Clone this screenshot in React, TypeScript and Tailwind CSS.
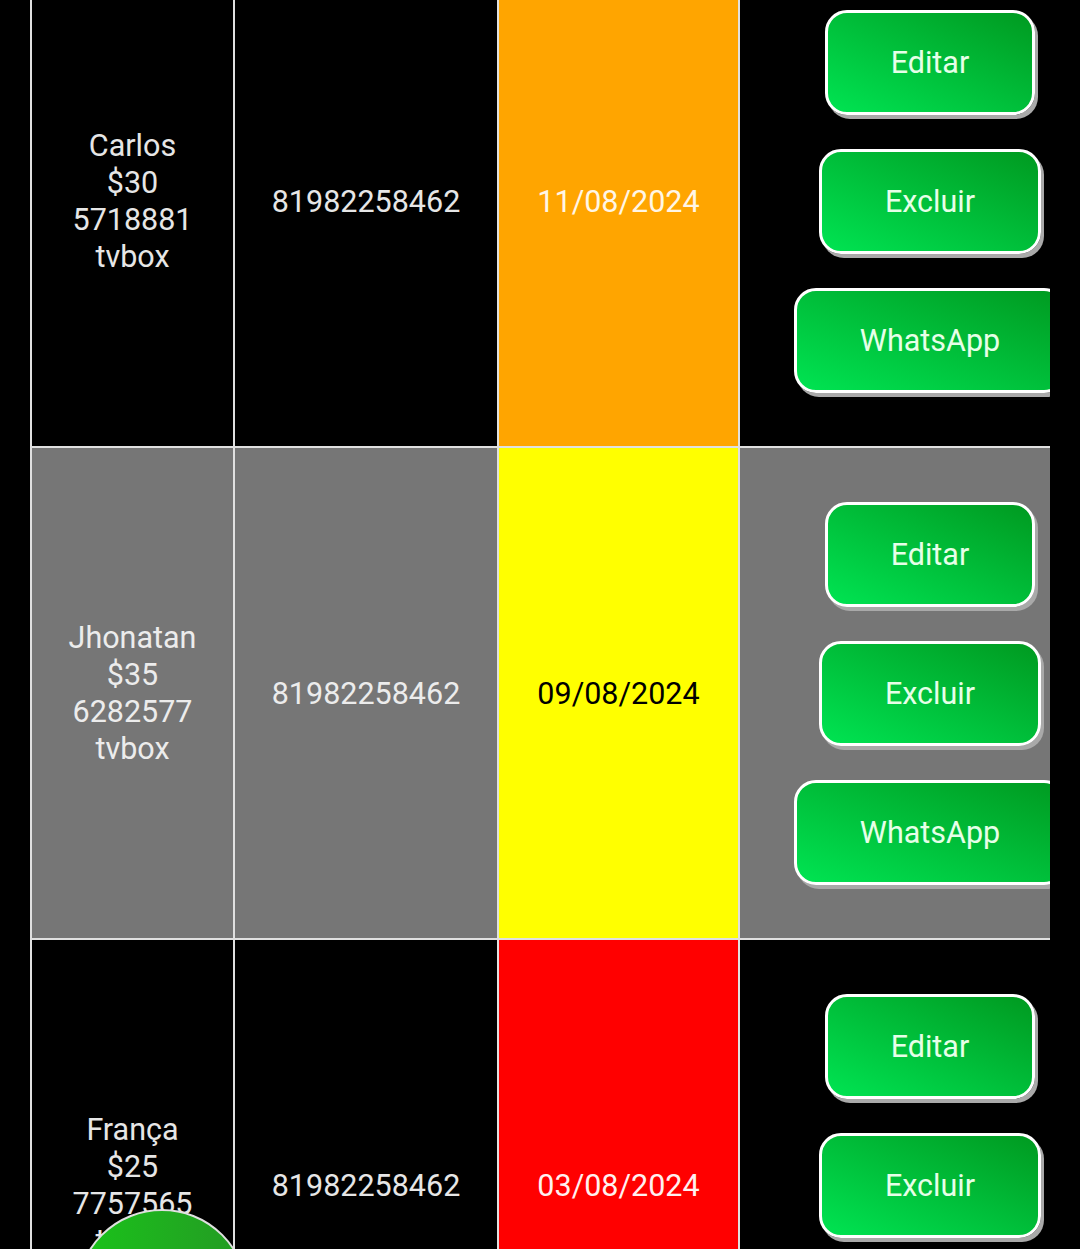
import React from 'react';

type Cliente = {
  nome: string;
  valor: string;
  codigo: string;
  tipo: string;
  telefone: string;
  vencimento: string;
  statusClass: string;
  rowClass: string;
};

const clientes: Cliente[] = [
  {
    nome: 'Carlos',
    valor: '$30',
    codigo: '5718881',
    tipo: 'tvbox',
    telefone: '81982258462',
    vencimento: '11/08/2024',
    statusClass: 'bg-[#ffa500] text-[#fff6e6]',
    rowClass: 'bg-black text-[#e6e6e6]',
  },
  {
    nome: 'Jhonatan',
    valor: '$35',
    codigo: '6282577',
    tipo: 'tvbox',
    telefone: '81982258462',
    vencimento: '09/08/2024',
    statusClass: 'bg-[#ffff00] text-black',
    rowClass: 'bg-[#767676] text-[#ececec]',
  },
  {
    nome: 'França',
    valor: '$25',
    codigo: '7757565',
    tipo: 'tvbox',
    telefone: '81982258462',
    vencimento: '03/08/2024',
    statusClass: 'bg-[#ff0000] text-[#fff0f0]',
    rowClass: 'bg-black text-[#e6e6e6]',
  },
];

const ActionButton = ({ label }: { label: string }) => (
  <button className="rounded-[22px] border-[3px] border-white bg-linear-to-tr from-[#00e452] to-[#009a20] px-[63px] py-[31px] text-[30.5px] leading-[37px] text-[#e6ffe8] shadow-[3px_4px_0_#a9a9a9] whitespace-nowrap">
    {label}
  </button>
);

export default function App() {
  return (
    <div className="min-h-[1249px] bg-black font-['Roboto',sans-serif]">
      <div className="ml-[30px] w-[1020px] h-[1249px] overflow-hidden">
        <table className="-mt-[46px] table-fixed border-collapse w-[1090px]">
          <colgroup>
            <col className="w-[203px]" />
            <col className="w-[264px]" />
            <col className="w-[241px]" />
            <col className="w-[382px]" />
          </colgroup>
          <tbody>
            {clientes.map((c, i) => (
              <tr key={i} className={c.rowClass}>
                <td className="h-[492px] border-[2px] border-[#e0e0e0] text-center align-middle text-[30.5px] leading-[37px]">
                  {c.nome}
                  <br />
                  {c.valor}
                  <br />
                  {c.codigo}
                  <br />
                  {c.tipo}
                </td>
                <td className="border-[2px] border-[#e0e0e0] text-center align-middle text-[30.5px] leading-[37px]">
                  {c.telefone}
                </td>
                <td className={`border-[2px] border-[#e0e0e0] text-center align-middle text-[30.5px] leading-[37px] ${c.statusClass}`}>
                  {c.vencimento}
                </td>
                <td className="border-[2px] border-[#e0e0e0] align-middle">
                  <div className="flex flex-col items-center gap-[34px]">
                    <ActionButton label="Editar" />
                    <ActionButton label="Excluir" />
                    <ActionButton label="WhatsApp" />
                  </div>
                </td>
              </tr>
            ))}
          </tbody>
        </table>
      </div>
      <button className="fixed left-[76px] top-[1209px] h-[172px] w-[172px] rounded-full border-2 border-[#e0e0e0] bg-linear-to-r from-[#18c418] to-[#239a23]" />
    </div>
  );
}
